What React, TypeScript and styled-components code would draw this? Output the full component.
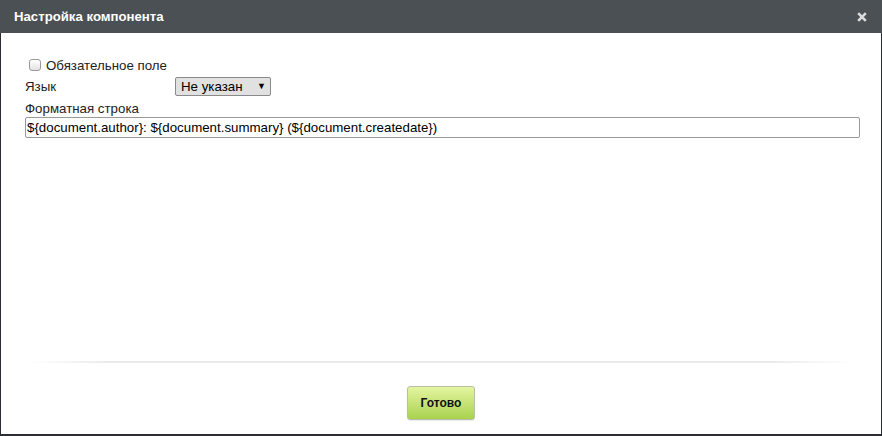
import * as React from "react";
import styled, { createGlobalStyle } from "styled-components";

const GlobalStyle = createGlobalStyle`
	html, body {
		margin: 0;
		padding: 0;
		background: #fff;
	}
	body {
		font-family: "Liberation Sans", Arial, sans-serif;
		font-size: 13.3px;
		color: #222;
	}
`;

const Dialog = styled.div`
	width: 882px;
	height: 436px;
	box-sizing: border-box;
	display: flex;
	flex-direction: column;
	background: #fff;
	border: 1px solid #2b2f33;
	border-top: none;
	border-bottom-width: 2px;
`;

const Header = styled.div`
	height: 33px;
	margin: 0 -1px;
	padding: 0 15px 0 14px;
	display: flex;
	align-items: center;
	justify-content: space-between;
	background: #4b5054;
	color: #fff;
	flex-shrink: 0;

	h1 {
		margin: 0;
		font-size: 13.2px;
		font-weight: bold;
	}
`;

const Close = styled.svg`
	width: 10px;
	height: 10px;
	cursor: pointer;
`;

const Body = styled.div`
	flex: 1;
	padding: 23px 21px 0 24px;
	display: flex;
	flex-direction: column;
`;

const CheckRow = styled.label`
	display: flex;
	align-items: center;
	gap: 5px;
	padding-left: 4px;
	height: 18px;
	color: #222;
`;

const Box = styled.span`
	width: 10px;
	height: 10px;
	border: 1px solid #9a9a9a;
	border-radius: 3px;
	background: linear-gradient(#fff, #e2e2e2);
`;

const FieldRow = styled.div`
	display: flex;
	align-items: center;
	height: 22px;
	margin-top: 1px;
`;

const Label = styled.div`
	width: 150px;
	color: #222;
`;

const Select = styled.div`
	width: 96px;
	height: 19px;
	box-sizing: border-box;
	border: 1px solid #8a8a8a;
	border-radius: 2px;
	background: #e1e1e1;
	display: flex;
	align-items: center;
	justify-content: space-between;
	padding: 0 4px 0 5px;
	color: #000;

	span:last-child {
		font-size: 9px;
	}
`;

const FormatLabel = styled.div`
	margin-top: 4px;
	height: 15px;
	line-height: 15px;
	color: #222;
`;

const TextInput = styled.div`
	margin-top: 1px;
	height: 21px;
	box-sizing: border-box;
	border: 1px solid #999;
	border-radius: 2px;
	padding: 0 1px;
	display: flex;
	align-items: center;
	color: #000;
	white-space: nowrap;
`;

const Footer = styled.div`
	flex-shrink: 0;
	padding: 0 24px 14px 24px;
	display: flex;
	flex-direction: column;
	align-items: center;
`;

const Rule = styled.div`
	align-self: stretch;
	height: 2px;
	margin: 0 2px;
	background: linear-gradient(90deg, #fff 0%, #ebebeb 10%, #ebebeb 90%, #fff 100%);
`;

const Button = styled.button`
	margin-top: 23px;
	width: 68px;
	height: 34px;
	border: 1px solid #b7bfa8;
	border-radius: 3px;
	background: linear-gradient(#e4f5a0, #a9d24f);
	font-family: "Liberation Sans", Arial, sans-serif;
	font-size: 12px;
	font-weight: bold;
	color: #111;
	box-shadow: 0 1px 1px rgba(0, 0, 0, 0.08);
	cursor: pointer;
`;

export default function App(): JSX.Element {
	return (
		<>
			<GlobalStyle />
			<Dialog>
				<Header>
					<h1>Настройка компонента</h1>
					<Close viewBox="0 0 10 10">
						<path d="M1.2 1.2 L8.8 8.8 M8.8 1.2 L1.2 8.8" stroke="#dcdcdc" strokeWidth="2.6" />
					</Close>
				</Header>
				<Body>
					<CheckRow>
						<Box />
						Обязательное поле
					</CheckRow>
					<FieldRow>
						<Label>Язык</Label>
						<Select>
							<span>Не указан</span>
							<span>▼</span>
						</Select>
					</FieldRow>
					<FormatLabel>Форматная строка</FormatLabel>
					<TextInput>
						{"${document.author}: ${document.summary} (${document.createdate})"}
					</TextInput>
				</Body>
				<Footer>
					<Rule />
					<Button>Готово</Button>
				</Footer>
			</Dialog>
		</>
	);
}
